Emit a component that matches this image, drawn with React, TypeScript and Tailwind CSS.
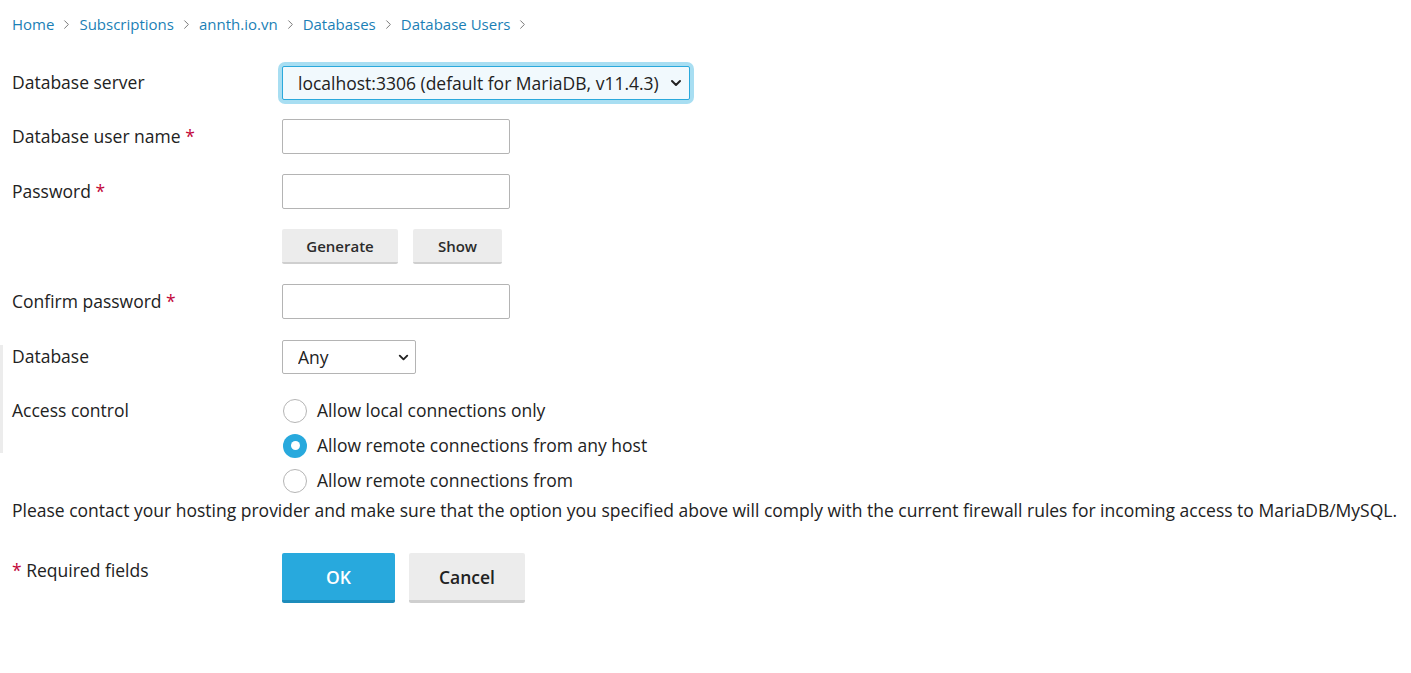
import { ChevronRight, ChevronDown } from 'lucide-react';

const crumbs = ['Home', 'Subscriptions', 'annth.io.vn', 'Databases', 'Database Users'];

function Req() {
  return <span className="text-[#c2073a]"> *</span>;
}

function Row({ label, children, className = 'h-[35px]' }: { label: React.ReactNode; children?: React.ReactNode; className?: string }) {
  return (
    <div className={`flex items-center ${className}`}>
      <div className="w-[270px] shrink-0 pb-[2px]">{label}</div>
      {children}
    </div>
  );
}

function TextInput() {
  return <input type="text" className="w-[228px] h-[35px] border border-[#b4b4b4] rounded-[2px] bg-white outline-none" />;
}

function Radio({ checked, label }: { checked?: boolean; label: string }) {
  return (
    <label className="flex items-center h-[35px] gap-[10px]">
      {checked ? (
        <span className="w-[24px] h-[24px] rounded-full bg-[#28a9dd] flex items-center justify-center">
          <span className="w-[9px] h-[9px] rounded-full bg-white" />
        </span>
      ) : (
        <span className="w-[24px] h-[24px] rounded-full border border-[#b5b5b5] bg-white" />
      )}
      <span className="pb-[1px]">{label}</span>
    </label>
  );
}

export default function App() {
  return (
    <div className="relative min-h-screen bg-white text-[17.5px] text-[#222] font-['Open_Sans',sans-serif]">
      {/* left edge marker */}
      <div className="absolute left-0 top-[345px] w-[3px] h-[108px] bg-[#ececec]" />

      <div className="px-[12px] pt-[14px]">
        {/* Breadcrumbs */}
        <nav className="flex items-center h-[20px] text-[15px] leading-5">
          {crumbs.map((c) => (
            <span key={c} className="flex items-center">
              <a className="text-[#1b7fb6]">{c}</a>
              <ChevronRight className="w-[15px] h-[15px] text-[#7a7a7a] mx-[5px]" strokeWidth={1.6} />
            </span>
          ))}
        </nav>

        <form className="mt-[32px] flex flex-col leading-6">
          <Row label="Database server" className="h-[34px]">
            <div className="relative rounded-[7px] p-[4px] bg-[#a8def2] -ml-[4px]">
              <select className="appearance-none w-[408px] h-[34px] pl-[15px] pr-[30px] border border-[#2aa9dc] rounded-[2px] bg-[#f1f9fd] text-[#222] outline-none">
                <option>localhost:3306 (default for MariaDB, v11.4.3)</option>
              </select>
              <ChevronDown className="absolute right-[10px] top-[13px] w-[16px] h-[16px] text-[#222] pointer-events-none" strokeWidth={3} />
            </div>
          </Row>

          <div className="mt-[19px]">
            <Row label={<>Database user name<Req /></>}>
              <TextInput />
            </Row>
          </div>

          <div className="mt-[20px]">
            <Row label={<>Password<Req /></>}>
              <TextInput />
            </Row>
          </div>

          <div className="mt-[20px]">
            <Row label="" className="h-[35px]">
              <div className="flex gap-[15px]">
                <button type="button" className="w-[116px] h-[35px] bg-[#ececec] border-b-2 border-[#cfcfcf] rounded-[2px] text-[15px] font-semibold text-[#2b2b2b]">
                  Generate
                </button>
                <button type="button" className="w-[89px] h-[35px] bg-[#ececec] border-b-2 border-[#cfcfcf] rounded-[2px] text-[15px] font-semibold text-[#2b2b2b]">
                  Show
                </button>
              </div>
            </Row>
          </div>

          <div className="mt-[20px]">
            <Row label={<>Confirm password<Req /></>}>
              <TextInput />
            </Row>
          </div>

          <div className="mt-[20px]">
            <Row label="Database">
              <div className="relative">
                <select className="appearance-none w-[134px] h-[34px] pl-[15px] pr-[28px] border border-[#b4b4b4] rounded-[2px] bg-white text-[#222] outline-none">
                  <option>Any</option>
                </select>
                <ChevronDown className="absolute right-[5px] top-[10px] w-[15px] h-[15px] text-[#222] pointer-events-none" strokeWidth={3} />
              </div>
            </Row>
          </div>

          <div className="mt-[19px] flex">
            <div className="w-[270px] shrink-0 h-[35px] flex items-center pb-[1px]">Access control</div>
            <div className="flex flex-col pl-[1px]">
              <Radio label="Allow local connections only" />
              <Radio checked label="Allow remote connections from any host" />
              <Radio label="Allow remote connections from" />
            </div>
          </div>

          <p className="leading-6">
            Please contact your hosting provider and make sure that the option you specified above will comply with the current firewall rules for incoming access to MariaDB/MySQL.
          </p>

          <div className="mt-[31px] flex">
            <div className="w-[270px] shrink-0 pt-[5px]">
              <span className="text-[#c2073a]">*</span> Required fields
            </div>
            <div className="flex gap-[14px]">
              <button type="button" className="w-[113px] h-[50px] bg-[#28a9dd] border-b-[3px] border-[#1d8cbb] rounded-[2px] text-white font-semibold">
                OK
              </button>
              <button type="button" className="w-[116px] h-[50px] bg-[#ececec] border-b-[3px] border-[#cfcfcf] rounded-[2px] text-[#222] font-semibold">
                Cancel
              </button>
            </div>
          </div>
        </form>
      </div>
    </div>
  );
}
